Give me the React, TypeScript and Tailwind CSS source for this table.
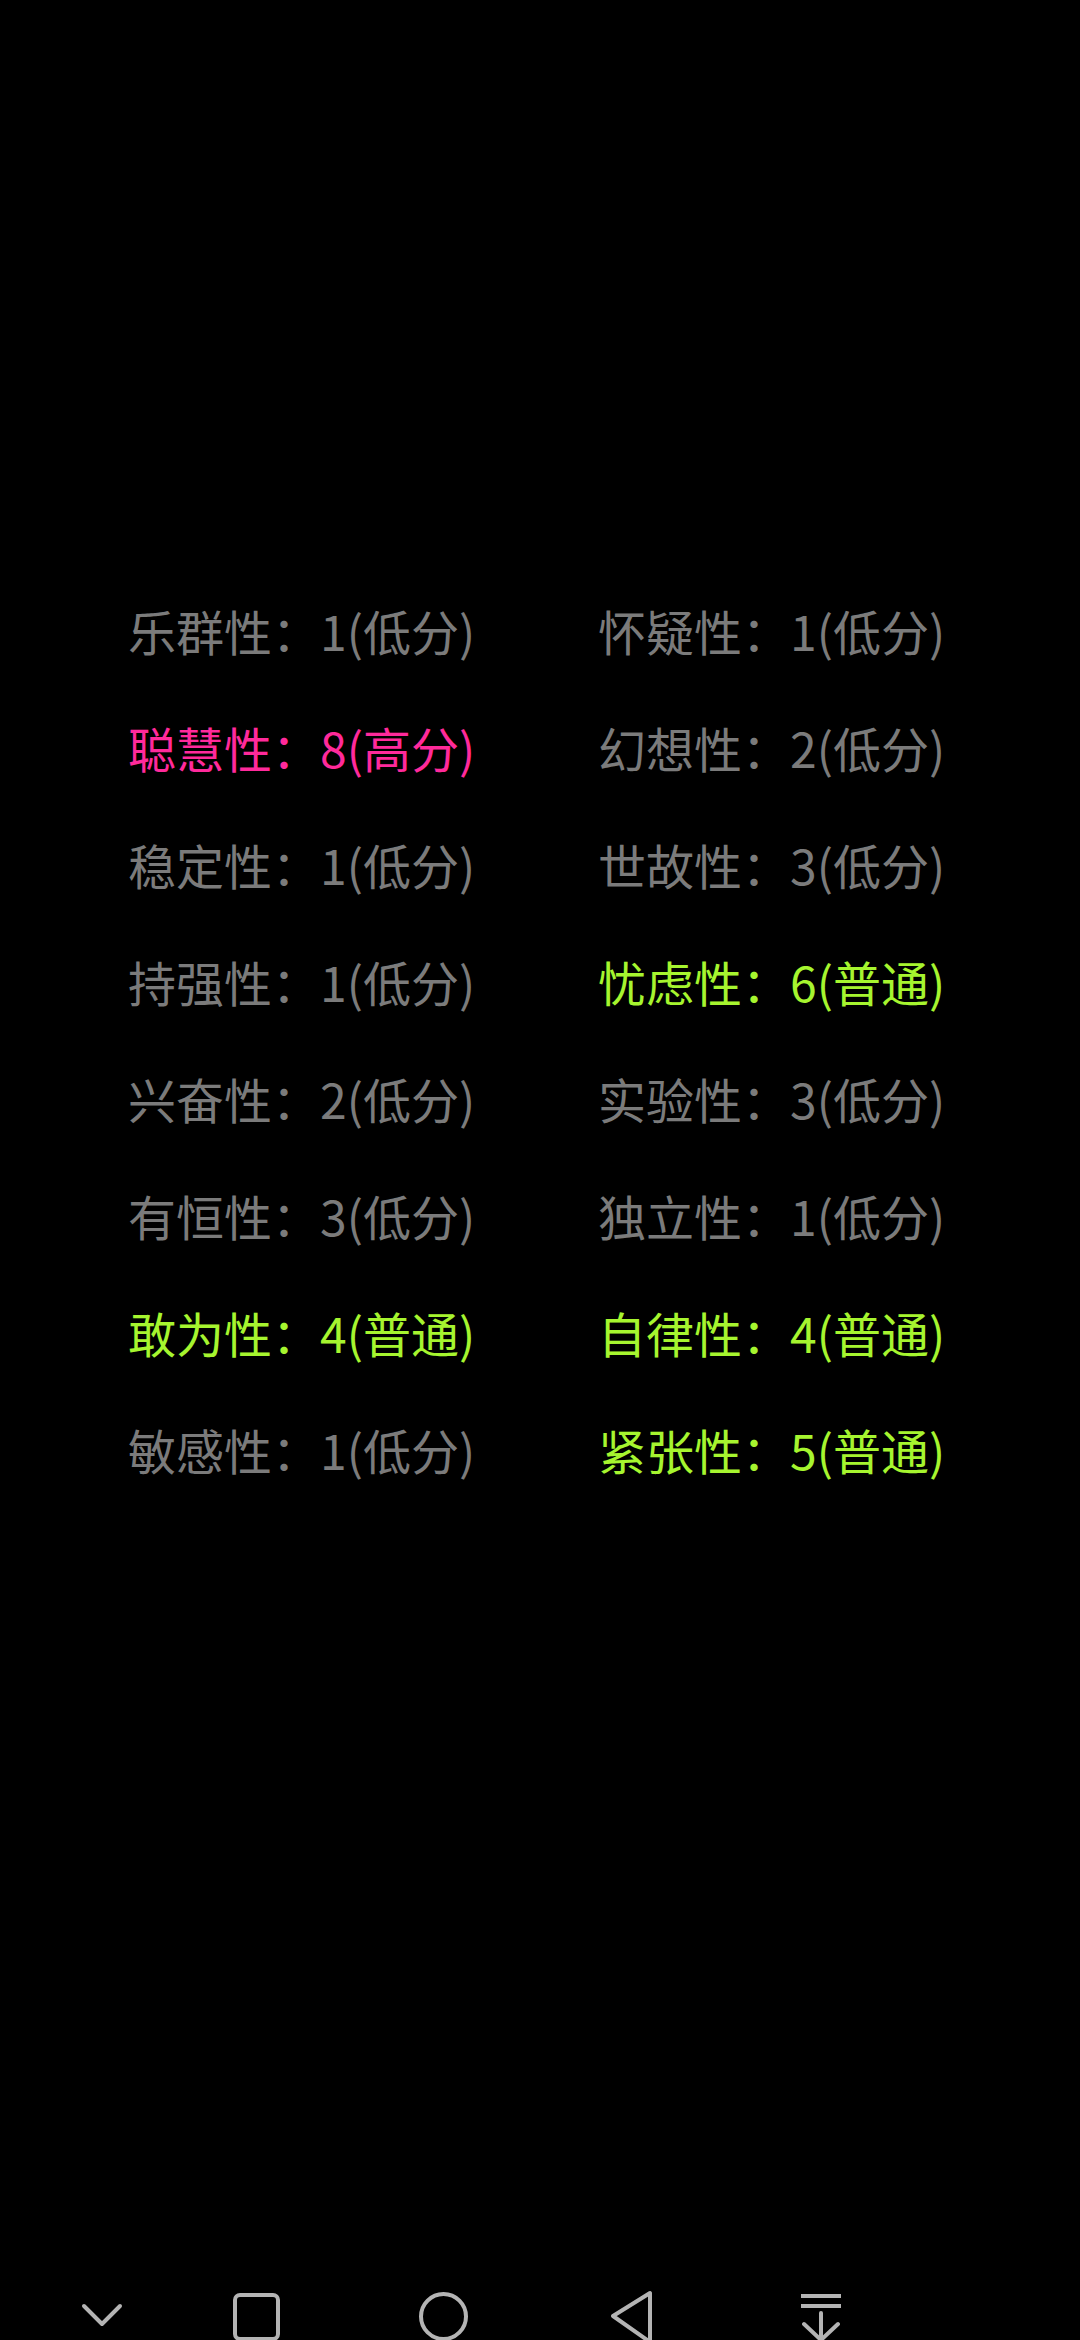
const traits: { label: string; score: string; tone: 'low' | 'mid' | 'high' }[][] = [
  [
    { label: '乐群性', score: '1(低分)', tone: 'low' },
    { label: '怀疑性', score: '1(低分)', tone: 'low' },
  ],
  [
    { label: '聪慧性', score: '8(高分)', tone: 'high' },
    { label: '幻想性', score: '2(低分)', tone: 'low' },
  ],
  [
    { label: '稳定性', score: '1(低分)', tone: 'low' },
    { label: '世故性', score: '3(低分)', tone: 'low' },
  ],
  [
    { label: '持强性', score: '1(低分)', tone: 'low' },
    { label: '忧虑性', score: '6(普通)', tone: 'mid' },
  ],
  [
    { label: '兴奋性', score: '2(低分)', tone: 'low' },
    { label: '实验性', score: '3(低分)', tone: 'low' },
  ],
  [
    { label: '有恒性', score: '3(低分)', tone: 'low' },
    { label: '独立性', score: '1(低分)', tone: 'low' },
  ],
  [
    { label: '敢为性', score: '4(普通)', tone: 'mid' },
    { label: '自律性', score: '4(普通)', tone: 'mid' },
  ],
  [
    { label: '敏感性', score: '1(低分)', tone: 'low' },
    { label: '紧张性', score: '5(普通)', tone: 'mid' },
  ],
]

const toneClass = {
  low: 'text-[#7b7b7b]',
  mid: 'text-[#a6f52f]',
  high: 'text-[#ff2a9b]',
}

function NavBar() {
  return (
    <div className="h-[96px] shrink-0 flex items-start pt-[46px] overflow-hidden text-[#b4b4b4]">
      {/* back-chevron */}
      <svg width="60" height="60" viewBox="0 0 60 60" className="ml-[71px]" fill="none" stroke="currentColor" strokeWidth={4} strokeLinecap="round" strokeLinejoin="round">
        <polyline points="13,16 31,34 49,16" />
      </svg>
      {/* recents */}
      <svg width="60" height="60" viewBox="0 0 60 60" className="ml-[94px]" fill="none" stroke="currentColor" strokeWidth={4}>
        <rect x="10" y="5" width="43" height="44" rx="5" />
      </svg>
      {/* home */}
      <svg width="60" height="60" viewBox="0 0 60 60" className="ml-[128px]" fill="none" stroke="currentColor" strokeWidth={4}>
        <circle cx="30.5" cy="26.5" r="22.5" />
      </svg>
      {/* back */}
      <svg width="60" height="60" viewBox="0 0 60 60" className="ml-[129px]" fill="none" stroke="currentColor" strokeWidth={4} strokeLinejoin="round">
        <polygon points="48,3 48,52 11,26" />
      </svg>
      {/* pull-down */}
      <svg width="60" height="60" viewBox="0 0 60 60" className="ml-[129px]" fill="none" stroke="currentColor" strokeWidth={4}>
        <line x1="10" y1="6" x2="50" y2="6" />
        <line x1="10" y1="16" x2="50" y2="16" />
        <line x1="30" y1="23" x2="30" y2="52" strokeLinecap="round" />
        <polyline points="13,34 30,50 47,34" strokeLinecap="round" strokeLinejoin="round" />
      </svg>
    </div>
  )
}

export default function App() {
  return (
    <div
      className="w-[1080px] h-[2340px] bg-black flex flex-col overflow-hidden"
      style={{ fontFamily: '"Noto Sans CJK SC", "Noto Sans", sans-serif' }}
    >
      <div className="flex-1 pt-[572px] pl-[128px]">
        {traits.map((row, i) => (
          <div key={i} className="flex h-[117px] items-center">
            {row.map((t) => (
              <div key={t.label} className={`w-[470px] text-[48px] leading-[117px] whitespace-nowrap ${toneClass[t.tone]}`}>
                {t.label}：{t.score}
              </div>
            ))}
          </div>
        ))}
      </div>
      <NavBar />
    </div>
  )
}
